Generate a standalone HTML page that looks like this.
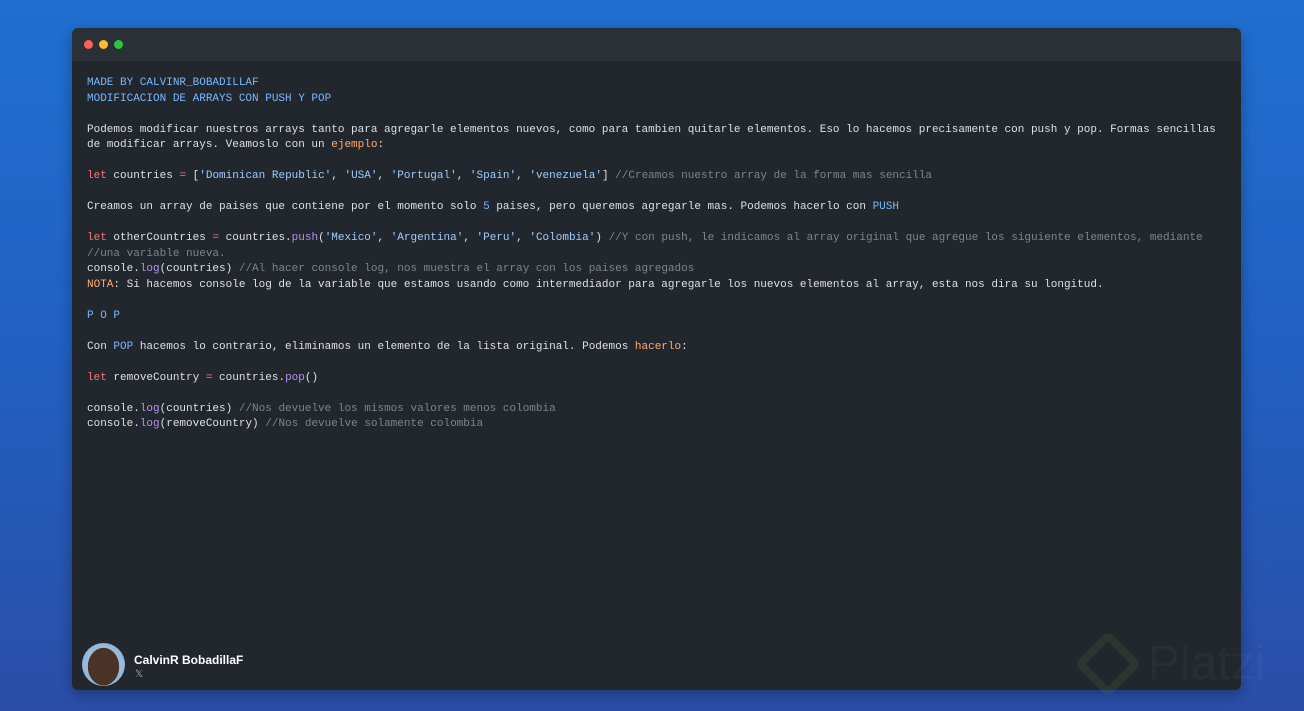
<!DOCTYPE html>
<html><head><meta charset="utf-8"><style>
html,body{margin:0;padding:0}
body{width:1304px;height:711px;overflow:hidden;background:linear-gradient(180deg,#1f6fd0 0%,#2160c2 50%,#2a4ea6 100%);position:relative;font-family:"Liberation Sans",sans-serif}
.win{position:absolute;left:72px;top:28px;width:1169px;height:662px;background:#22262d;border-radius:6px;overflow:hidden;box-shadow:0 4px 14px rgba(0,0,0,.3)}
.hdr{height:33px;background:#2b2f36;position:relative}
.dot{position:absolute;top:12px;width:9px;height:9px;border-radius:50%}
pre{position:absolute;left:15px;top:48px;margin:0;font-family:"Liberation Mono",monospace;font-size:11px;line-height:15.5px;color:#dde1e6}
.b{color:#79b8ff}.k{color:#f97583}.s{color:#9ecbff}.o{color:#ffab70}.c{color:#7d858f}.f{color:#b392f0}
.av{position:absolute;left:10px;top:615px;width:43px;height:43px;border-radius:50%;background:radial-gradient(ellipse 40% 48% at 50% 55%,#4a3226 0 90%,transparent 92%),radial-gradient(circle at 50% 50%,#b9d3ea 0,#7fa9d2 100%)}
.nm{position:absolute;left:62px;top:625px;color:#fff;font-size:12px;font-weight:bold}
.x{position:absolute;left:63px;top:641px;color:#aaa;font-size:10px}
.wm{position:absolute;left:1084px;top:640px;width:32px;height:32px;border:8px solid rgba(90,110,60,.22);border-radius:8px;transform:rotate(45deg)}
.wt{position:absolute;left:1148px;top:636px;font-size:48px;color:rgba(255,255,255,.035)}
</style></head><body>
<div class="win">
<div class="hdr"><div class="dot" style="left:12px;background:#ff5f57"></div><div class="dot" style="left:27px;background:#febc2e"></div><div class="dot" style="left:42px;background:#28c840"></div></div>
<pre><span class="b">MADE BY CALVINR_BOBADILLAF
MODIFICACION DE ARRAYS CON PUSH Y POP</span>

Podemos modificar nuestros arrays tanto para agregarle elementos nuevos, como para tambien quitarle elementos. Eso lo hacemos precisamente con push y pop. Formas sencillas
de modificar arrays. Veamoslo con un <span class="o">ejemplo</span>:

<span class="k">let</span> countries <span class="k">=</span> [<span class="s">'Dominican Republic'</span>, <span class="s">'USA'</span>, <span class="s">'Portugal'</span>, <span class="s">'Spain'</span>, <span class="s">'venezuela'</span>] <span class="c">//Creamos nuestro array de la forma mas sencilla</span>

Creamos un array de paises que contiene por el momento solo <span class="b">5</span> paises, pero queremos agregarle mas. Podemos hacerlo con <span class="b">PUSH</span>

<span class="k">let</span> otherCountries <span class="k">=</span> countries.<span class="f">push</span>(<span class="s">'Mexico'</span>, <span class="s">'Argentina'</span>, <span class="s">'Peru'</span>, <span class="s">'Colombia'</span>) <span class="c">//Y con push, le indicamos al array original que agregue los siguiente elementos, mediante
//una variable nueva.</span>
console.<span class="f">log</span>(countries) <span class="c">//Al hacer console log, nos muestra el array con los paises agregados</span>
<span class="o">NOTA</span>: Si hacemos console log de la variable que estamos usando como intermediador para agregarle los nuevos elementos al array, esta nos dira su longitud.

<span class="b">P O P</span>

Con <span class="b">POP</span> hacemos lo contrario, eliminamos un elemento de la lista original. Podemos <span class="o">hacerlo</span>:

<span class="k">let</span> removeCountry <span class="k">=</span> countries.<span class="f">pop</span>()

console.<span class="f">log</span>(countries) <span class="c">//Nos devuelve los mismos valores menos colombia</span>
console.<span class="f">log</span>(removeCountry) <span class="c">//Nos devuelve solamente colombia</span></pre>
<div class="av"></div>
<div class="nm">CalvinR BobadillaF</div>
<div class="x">𝕏</div>
</div>
<div class="wm"></div>
<div class="wt">Platzi</div>
</body></html>
